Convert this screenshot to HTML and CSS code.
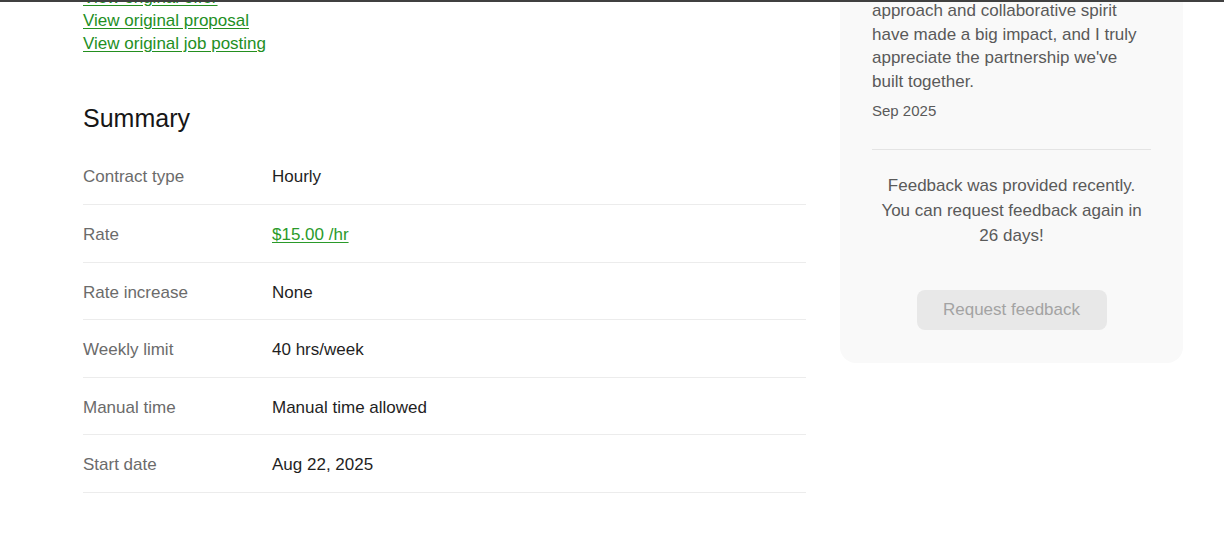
FILE: index.html
```html
<!DOCTYPE html>
<html lang="en">
<head>
<meta charset="utf-8">
<title>Contract details</title>
<link rel="stylesheet" href="styles.css">
</head>
<body>
<div class="topbar"></div>
<div class="viewport">
  <div class="page">
    <main class="main">
      <div class="links">
        <a href="#" class="link">View original offer</a>
        <a href="#" class="link">View original proposal</a>
        <a href="#" class="link">View original job posting</a>
      </div>
      <h2 class="heading">Summary</h2>
      <dl class="summary">
        <div class="row"><dt class="label">Contract type</dt><dd class="value">Hourly</dd></div>
        <div class="row"><dt class="label">Rate</dt><dd class="value"><a href="#" class="rate">$15.00 /hr</a></dd></div>
        <div class="row"><dt class="label">Rate increase</dt><dd class="value">None</dd></div>
        <div class="row"><dt class="label">Weekly limit</dt><dd class="value">40 hrs/week</dd></div>
        <div class="row"><dt class="label">Manual time</dt><dd class="value">Manual time allowed</dd></div>
        <div class="row"><dt class="label">Start date</dt><dd class="value">Aug 22, 2025</dd></div>
      </dl>
    </main>
    <aside class="side">
      <div class="card">
        <p class="quote">approach and collaborative spirit have made a big impact, and I truly appreciate the partnership we've built together.</p>
        <div class="date">Sep 2025</div>
        <hr class="divider">
        <p class="notice">Feedback was provided recently.<br>You can request feedback again in 26&nbsp;days!</p>
        <div class="actions">
          <button class="btn" type="button" disabled>Request feedback</button>
        </div>
      </div>
    </aside>
  </div>
</div>
</body>
</html>
```

FILE: styles.css
```css
* { box-sizing: border-box; }
html, body { margin: 0; padding: 0; background: #ffffff; }
body {
  font-family: "Liberation Sans", Arial, sans-serif;
  font-size: 17px;
  color: #1f1f1f;
}
.topbar {
  position: fixed;
  top: 0; left: 0; right: 0;
  height: 2px;
  background: #404040;
  z-index: 10;
}
.viewport {
  height: 534px;
  overflow: hidden;
}
.page {
  display: flex;
  gap: 34px;
  padding-left: 83px;
  margin-top: -14px;
}
.main { width: 723px; flex: none; }
.links { display: flex; flex-direction: column; align-items: flex-start; }
.link {
  color: #238f1f;
  text-decoration: underline;
  text-underline-offset: 2px;
  line-height: 23px;
}
.heading {
  margin: 47px 0 13.4px;
  font-size: 25px;
  font-weight: 400;
  line-height: 32px;
  color: #161616;
}
.summary { margin: 0; }
.row {
  display: flex;
  padding: 19px 0 16.6px;
  border-bottom: 1px solid #ececec;
  line-height: 21px;
}
.label { width: 189px; margin: 0; color: #6b6b6b; }
.value { margin: 0; color: #1f1f1f; }
.rate {
  color: #2a9a2a;
  text-decoration: underline;
  text-underline-offset: 2px;
}
.side { width: 343px; flex: none; }
.card {
  background: #f9f9f9;
  border-radius: 16px;
  padding: 13px 32px 33px;
  color: #5a5a5a;
}
.quote { margin: 0; line-height: 23.5px; }
.date { margin-top: 8px; font-size: 15px; line-height: 20px; }
.divider {
  border: 0;
  border-top: 1px solid #e4e4e4;
  margin: 28px 0 0;
}
.notice {
  margin: 23px 0 0;
  text-align: center;
  line-height: 25px;
}
.actions { display: flex; justify-content: center; margin-top: 41.5px; }
.btn {
  width: 190px;
  height: 40px;
  border: 0;
  border-radius: 8px;
  background: #e8e8e8;
  color: #a3a3a3;
  font-family: inherit;
  font-size: 17px;
}
```
